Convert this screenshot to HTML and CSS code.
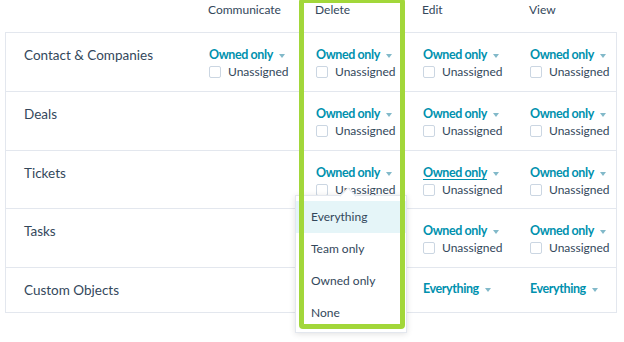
FILE: index.html
```html
<!DOCTYPE html>
<html>
<head>
<meta charset="utf-8">
<link rel="stylesheet" href="styles.css">
</head>
<body>
<div class="page">
  <div class="head">
    <div></div>
    <div class="hcell">Communicate</div>
    <div class="hcell">Delete</div>
    <div class="hcell">Edit</div>
    <div class="hcell">View</div>
  </div>
  <div class="table">
    <div class="row">
      <div class="label">Contact &amp; Companies</div>
      <div class="cell"><span class="sel">Owned only<i class="caret"></i></span><label class="chk"><span class="box"></span>Unassigned</label></div>
      <div class="cell"><span class="sel">Owned only<i class="caret"></i></span><label class="chk"><span class="box"></span>Unassigned</label></div>
      <div class="cell"><span class="sel">Owned only<i class="caret"></i></span><label class="chk"><span class="box"></span>Unassigned</label></div>
      <div class="cell"><span class="sel">Owned only<i class="caret"></i></span><label class="chk"><span class="box"></span>Unassigned</label></div>
    </div>
    <div class="row">
      <div class="label">Deals</div>
      <div class="cell"></div>
      <div class="cell"><span class="sel">Owned only<i class="caret"></i></span><label class="chk"><span class="box"></span>Unassigned</label></div>
      <div class="cell"><span class="sel">Owned only<i class="caret"></i></span><label class="chk"><span class="box"></span>Unassigned</label></div>
      <div class="cell"><span class="sel">Owned only<i class="caret"></i></span><label class="chk"><span class="box"></span>Unassigned</label></div>
    </div>
    <div class="row short">
      <div class="label">Tickets</div>
      <div class="cell"></div>
      <div class="cell"><span class="sel">Owned only<i class="caret"></i></span><label class="chk"><span class="box"></span>Unassigned</label></div>
      <div class="cell"><span class="sel"><u>Owned only</u><i class="caret"></i></span><label class="chk"><span class="box"></span>Unassigned</label></div>
      <div class="cell"><span class="sel">Owned only<i class="caret"></i></span><label class="chk"><span class="box"></span>Unassigned</label></div>
    </div>
    <div class="row">
      <div class="label">Tasks</div>
      <div class="cell"></div>
      <div class="cell"></div>
      <div class="cell"><span class="sel">Owned only<i class="caret"></i></span><label class="chk"><span class="box"></span>Unassigned</label></div>
      <div class="cell"><span class="sel">Owned only<i class="caret"></i></span><label class="chk"><span class="box"></span>Unassigned</label></div>
    </div>
    <div class="row last">
      <div class="label">Custom Objects</div>
      <div class="cell"></div>
      <div class="cell"></div>
      <div class="cell"><span class="sel">Everything<i class="caret"></i></span></div>
      <div class="cell"><span class="sel">Everything<i class="caret"></i></span></div>
    </div>
  </div>

  <div class="menu">
    <div class="pointer"></div>
    <div class="item active">Everything</div>
    <div class="item">Team only</div>
    <div class="item">Owned only</div>
    <div class="item">None</div>
  </div>
  <div class="highlight"></div>
</div>
</body>
</html>
```

FILE: styles.css
```css
* { box-sizing: border-box; }
html, body { margin: 0; padding: 0; background: #fff; }
body {
  font-family: Lato, "Open Sans", sans-serif;
  color: #33475b;
  width: 624px;
  height: 342px;
  overflow: hidden;
}
.page {
  position: relative;
  padding-left: 5px;
  width: 624px;
  height: 342px;
}
.head, .row {
  display: grid;
  grid-template-columns: 203px 107px 107px 107px 88px;
}
.head {
  height: 32px;
  padding-top: 2px;
  font-size: 12px;
}
.hcell { line-height: 16px; }
.table {
  width: 612px;
  border: 1px solid #e3e7ee;
}
.row {
  height: 59px;
  border-bottom: 1px solid #e3e7ee;
}
.row.short { height: 58px; }
.row.last { height: 44px; border-bottom: none; }
.label {
  padding-left: 18px;
  padding-top: 13px;
  font-size: 13.5px;
  line-height: 18px;
}
.cell {
  padding-top: 14px;
  display: flex;
  flex-direction: column;
  align-items: flex-start;
}
.row.last .cell { padding-top: 13px; }
.sel {
  color: #0091ae;
  font-weight: 700;
  font-size: 12.5px;
  letter-spacing: -0.4px;
  line-height: 16px;
  display: inline-flex;
  align-items: center;
}
.sel u { text-decoration-thickness: 1px; text-underline-offset: 2px; }
.caret {
  display: inline-block;
  width: 0; height: 0;
  border-left: 3.5px solid transparent;
  border-right: 3.5px solid transparent;
  border-top: 4px solid #82b9c9;
  margin-left: 6px;
  margin-top: 1px;
}
.chk {
  display: flex;
  align-items: center;
  font-size: 12px;
  line-height: 16px;
  color: #33475b;
  margin-top: 1px;
}
.box {
  width: 12px; height: 12px;
  border: 1px solid #cbd6e2;
  border-radius: 2px;
  background: #fff;
  margin-right: 7px;
}
.menu {
  position: absolute;
  left: 295px;
  top: 195px;
  width: 112px;
  height: 138px;
  background: #fff;
  border: 1px solid #e3e7ee;
  box-shadow: 0 1px 6px rgba(0,0,0,0.12);
  padding-top: 5px;
  font-size: 12px;
}
.pointer {
  position: absolute;
  width: 12px; height: 12px;
  background: #fff;
  left: 46px;
  top: -6px;
  transform: rotate(45deg);
  border-left: 1px solid #e3e7ee;
  border-top: 1px solid #e3e7ee;
}
.item {
  position: relative;
  height: 32px;
  line-height: 32px;
  padding-left: 15px;
  color: #33475b;
}
.item.active { background: #e5f5f8; }
.highlight {
  position: absolute;
  left: 299px;
  top: -2px;
  width: 106px;
  height: 331px;
  border: 5px solid #a2d73a;
  border-radius: 4px;
  pointer-events: none;
}
```
